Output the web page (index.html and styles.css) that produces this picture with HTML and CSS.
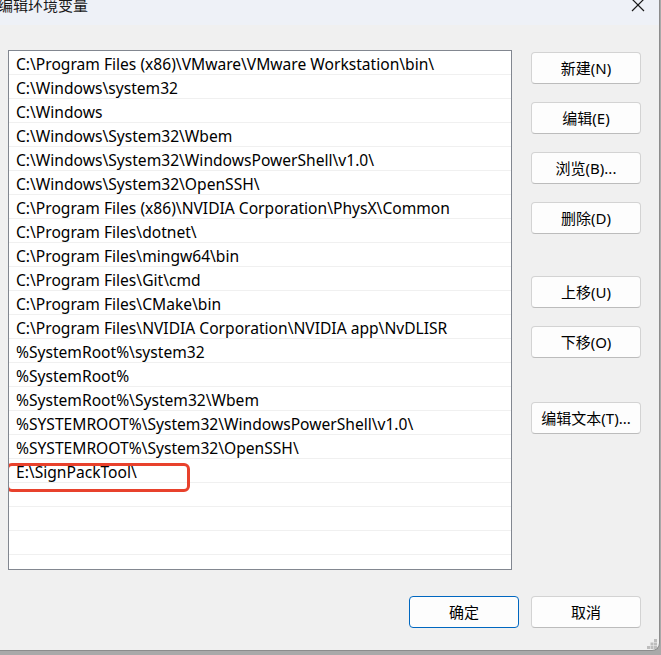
FILE: index.html
```html
<!DOCTYPE html>
<html lang="zh-CN">
<head>
    <meta charset="UTF-8">
    <title>编辑环境变量</title>
    <link rel="stylesheet" href="styles.css">
</head>
<body>

    <div class="window">

        <!-- title bar -->
        <div class="titlebar">
            <div class="title">编辑环境变量</div>
            <svg class="close" width="14" height="14" viewBox="0 0 14 14">
                <path d="M1 0 L13 12 M13 0 L1 12" stroke="#1a1a1a" stroke-width="1.2" fill="none"/>
            </svg>
        </div>

        <div class="content">

            <!-- path list -->
            <div class="list">
                <div class="row">C:\Program Files (x86)\VMware\VMware Workstation\bin\</div>
                <div class="row">C:\Windows\system32</div>
                <div class="row">C:\Windows</div>
                <div class="row">C:\Windows\System32\Wbem</div>
                <div class="row">C:\Windows\System32\WindowsPowerShell\v1.0\</div>
                <div class="row">C:\Windows\System32\OpenSSH\</div>
                <div class="row">C:\Program Files (x86)\NVIDIA Corporation\PhysX\Common</div>
                <div class="row">C:\Program Files\dotnet\</div>
                <div class="row">C:\Program Files\mingw64\bin</div>
                <div class="row">C:\Program Files\Git\cmd</div>
                <div class="row">C:\Program Files\CMake\bin</div>
                <div class="row">C:\Program Files\NVIDIA Corporation\NVIDIA app\NvDLISR</div>
                <div class="row">%SystemRoot%\system32</div>
                <div class="row">%SystemRoot%</div>
                <div class="row">%SystemRoot%\System32\Wbem</div>
                <div class="row">%SYSTEMROOT%\System32\WindowsPowerShell\v1.0\</div>
                <div class="row">%SYSTEMROOT%\System32\OpenSSH\</div>
                <div class="row">E:\SignPackTool\</div>
                <div class="row"></div>
                <div class="row"></div>
                <div class="row"></div>

                <!-- red annotation -->
                <div class="mark"></div>
            </div>

            <!-- side buttons -->
            <div class="side">
                <div class="btn">新建(N)</div>
                <div class="btn">编辑(E)</div>
                <div class="btn">浏览(B)...</div>
                <div class="btn">删除(D)</div>
                <div class="btn gap1">上移(U)</div>
                <div class="btn">下移(O)</div>
                <div class="btn gap2">编辑文本(T)...</div>
            </div>
        </div>

        <div class="footer">
            <div class="btn default">确定</div>
            <div class="btn">取消</div>
        </div>

        <svg class="grip" width="10" height="10" viewBox="0 0 10 10">
            <rect x="7" y="0" width="3" height="3" fill="#bdbdbd"/>
            <rect x="3.5" y="3.5" width="3" height="3" fill="#bdbdbd"/>
            <rect x="7" y="3.5" width="3" height="3" fill="#bdbdbd"/>
            <rect x="0" y="7" width="3" height="3" fill="#bdbdbd"/>
            <rect x="3.5" y="7" width="3" height="3" fill="#bdbdbd"/>
            <rect x="7" y="7" width="3" height="3" fill="#bdbdbd"/>
        </svg>
    </div>

</body>
</html>
```

FILE: styles.css
```css
html, body{
    margin: 0;
    padding: 0;
}

body{
    width: 661px;
    height: 655px;
    overflow: hidden;
    background-color: #a9a9a9;
    font-family: "Noto Sans", "Noto Sans CJK SC", sans-serif;
    font-size: 14px;
    color: #000;
}

.window{
    position: relative;
    width: 659px;
    height: 650px;
    background-color: #f0f0f0;
    border-right: 1px solid #8c8c8c;
    border-bottom: 1px solid #8c8c8c;
    border-bottom-right-radius: 8px;
    overflow: hidden;
}

/* title bar */
.titlebar{
    height: 25px;
    background-color: #eef1f7;
    display: flex;
    justify-content: space-between;
    align-items: flex-start;
    overflow: hidden;
}

.title{
    font-family: "Noto Sans CJK SC", sans-serif;
    font-size: 15px;
    line-height: 20px;
    margin-top: -5px;
    margin-left: -2px;
    color: #1a1a1a;
}

.close{
    margin-top: -1px;
    margin-right: 14px;
}

/* main area */
.content{
    display: flex;
    gap: 19px;
    padding: 25px 0 0 8px;
}

.list{
    position: relative;
    width: 502px;
    height: 518px;
    background-color: #fff;
    border: 1px solid #828790;
    overflow: hidden;
}

.row{
    height: 21px;
    line-height: 23px;
    padding-top: 2px;
    border-bottom: 1px solid #f0f0f0;
    padding-left: 7px;
    font-size: 15.6px;
    white-space: nowrap;
}

.mark{
    position: absolute;
    left: -3px;
    top: 412px;
    width: 178px;
    height: 23px;
    border: 3px solid #e8412c;
    border-radius: 6px;
}

.side{
    display: flex;
    flex-direction: column;
    gap: 18px;
    padding-top: 2px;
}

.btn{
    width: 108px;
    height: 30px;
    line-height: 30px;
    text-align: center;
    background-color: #fdfdfd;
    border: 1px solid #d3d3d3;
    border-bottom-color: #bcbcbc;
    border-radius: 4px;
    font-family: "Noto Sans", "Noto Sans CJK SC", sans-serif;
    font-size: 15px;
}

.gap1{
    margin-top: 24px;
}

.gap2{
    margin-top: 26px;
}

.footer{
    display: flex;
    justify-content: flex-end;
    gap: 12px;
    padding: 26px 18px 0 0;
}

.default{
    border: 1px solid #0067c0;
}

.grip{
    position: absolute;
    right: 2px;
    bottom: 1px;
}
```
